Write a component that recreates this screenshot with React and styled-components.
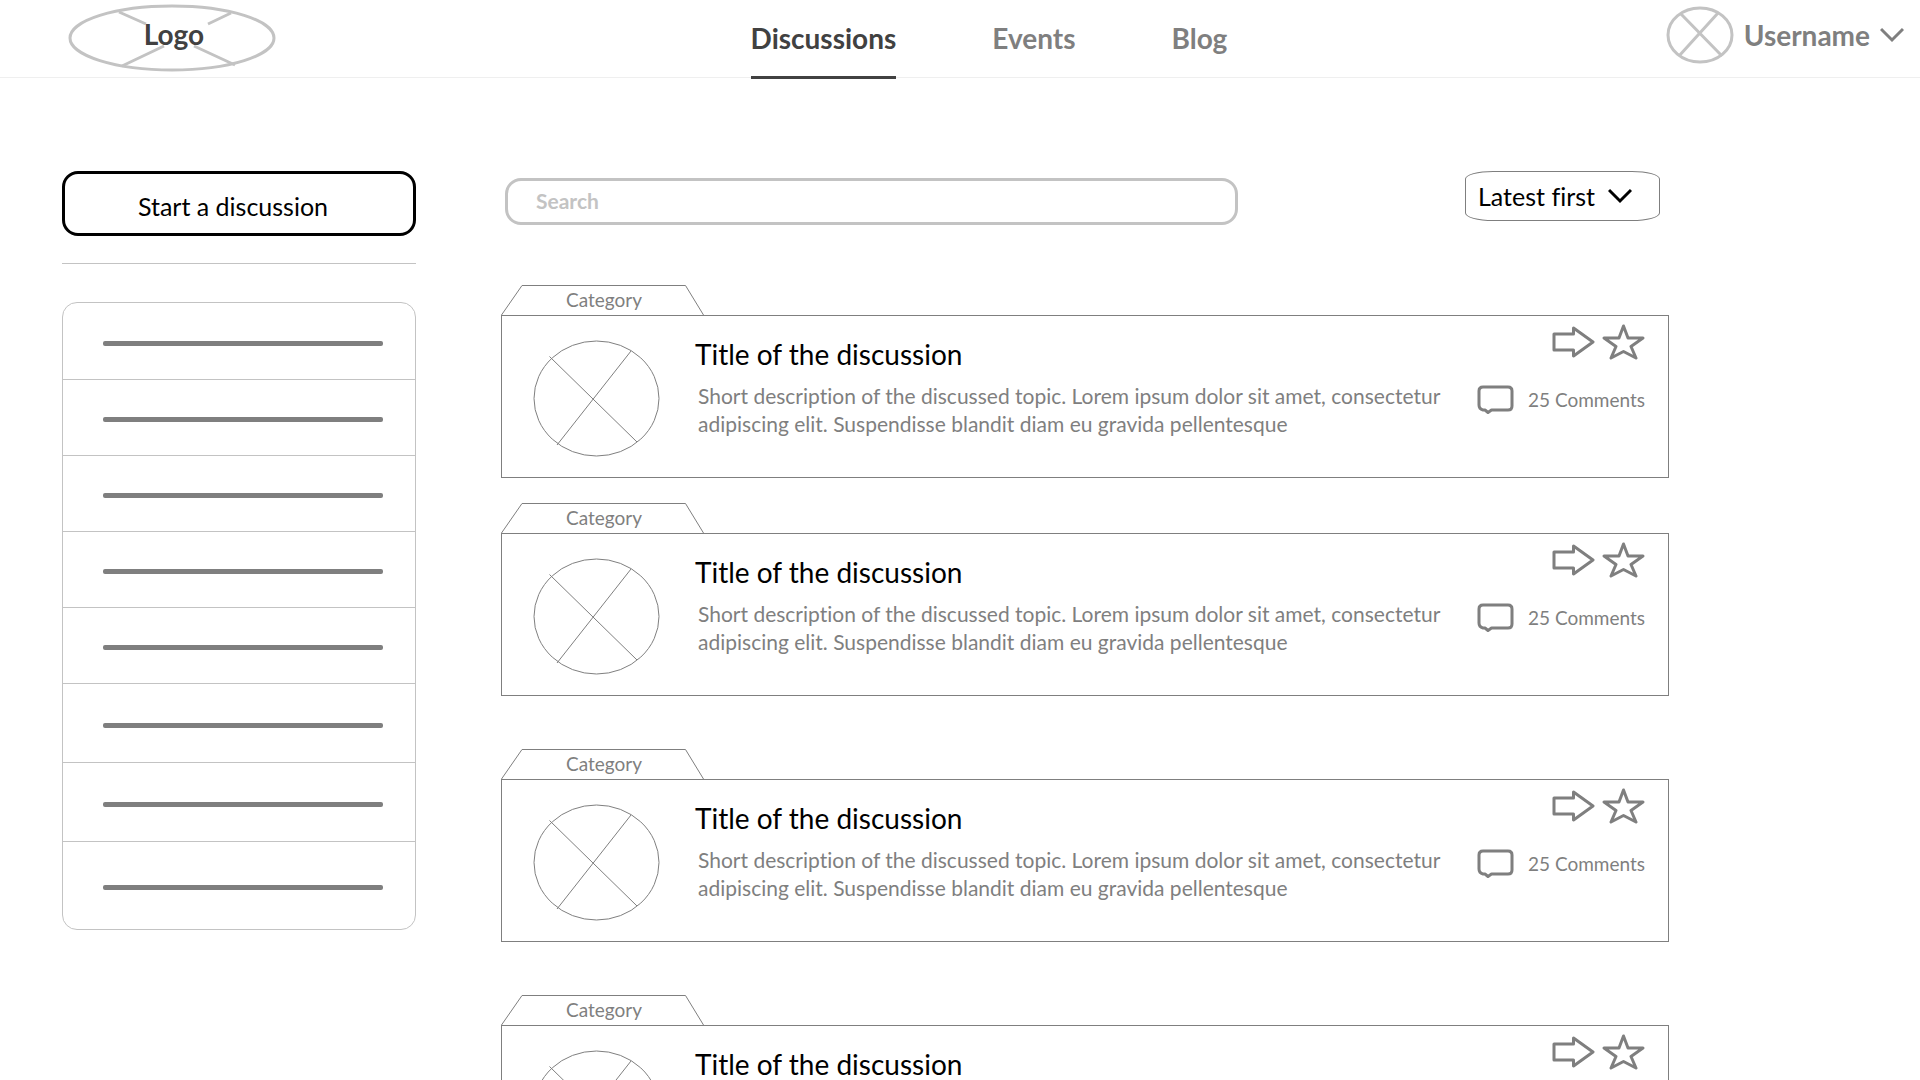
import React from "react";
import styled, { createGlobalStyle } from "styled-components";

const ink = "#414141";
const mid = "#7f7f7f";
const pale = "#c3c3c3";

const GlobalStyle = createGlobalStyle`
  *, *::before, *::after { box-sizing: border-box; }
  body {
    margin: 0;
    background: #fff;
    color: ${mid};
    font-family: Lato, "Open Sans", sans-serif;
    font-variant-ligatures: none;
  }
  button, input, select { font: inherit; color: inherit; font-variant-ligatures: none; }
  button { background: none; border: 0; padding: 0; cursor: pointer; }
  a { color: inherit; text-decoration: none; }
  svg { display: block; fill: none; flex: none; }
`;

const Header = styled.header`
  display: grid;
  grid-template-columns: 1fr auto 1fr;
  height: 78px;
  padding: 0 16px 0 68px;
  border-bottom: 1px solid #efefef;
`;

const Brand = styled.a`
  display: grid;
  align-items: center;
  justify-items: center;
  justify-self: start;
  height: 76px;
  color: ${ink};
  font-size: 28px;
  line-height: 28px;
  font-weight: 700;

  > * { grid-area: 1 / 1; }
  span { padding: 0 0 8px 4px; }
`;

const Nav = styled.nav`
  display: flex;
  gap: 96px;
  padding-left: 6px;
`;

const NavLink = styled.a`
  position: relative;
  display: flex;
  align-items: center;
  padding-bottom: 2px;
  color: ${(p) => (p.$active ? ink : mid)};
  font-size: 28px;
  line-height: 32px;
  font-weight: 700;

  &::after {
    content: "";
    display: ${(p) => (p.$active ? "block" : "none")};
    position: absolute;
    left: 0;
    right: 0;
    bottom: -2px;
    height: 3px;
    background: ${ink};
  }
`;

const Account = styled.button`
  display: flex;
  align-items: center;
  justify-self: end;
  gap: 10px;
  height: 70px;
  font-size: 28px;
  line-height: 32px;
  font-weight: 700;
`;

const Page = styled.div`
  display: grid;
  grid-template-columns: 354px minmax(0, 1168px);
  column-gap: 85px;
  padding: 93px 62px 40px;
`;

const Sidebar = styled.aside`
  display: flex;
  flex-direction: column;
`;

const StartButton = styled.button`
  height: 65px;
  padding: 4px 12px 0 0;
  border: 3px solid #000;
  border-radius: 16px;
  color: #000;
  font-size: 25px;
`;

const Rule = styled.hr`
  width: 100%;
  margin: 27px 0 38px;
  border: 0;
  border-top: 1px solid ${pale};
`;

const TopicList = styled.ul`
  margin: 0;
  padding: 0;
  list-style: none;
  border: 1px solid ${pale};
  border-radius: 15px;
`;

const Topic = styled.li`
  display: flex;
  align-items: center;
  height: 76px;
  padding: 4px 32px 0 40px;

  & + & { border-top: 1px solid ${pale}; }
  &:nth-child(n + 6) { height: 79px; }
  &:last-child { height: 88px; }
`;

const TopicBar = styled.span`
  flex: 1;
  height: 5px;
  border-radius: 2px;
  background: ${mid};
`;

const Toolbar = styled.div`
  display: flex;
  align-items: flex-start;
  justify-content: space-between;
  gap: 32px;
  padding: 0 9px 0 4px;
  margin-bottom: 60px;
`;

const SearchBox = styled.input`
  flex: 0 1 733px;
  min-width: 0;
  height: 47px;
  margin-top: 7px;
  padding: 0 28px 3px;
  border: 3px solid ${pale};
  border-radius: 16px;
  background: #fff;
  color: ${ink};
  font-size: 21px;
  font-weight: 700;

  &::placeholder { color: ${pale}; opacity: 1; }
`;

const SortBox = styled.div`
  display: grid;
  align-items: center;

  > * { grid-area: 1 / 1; }
  svg { justify-self: end; margin-right: 28px; pointer-events: none; }
`;

const SortSelect = styled.select`
  appearance: none;
  width: 195px;
  height: 50px;
  padding: 0 60px 0 12px;
  border: 1px solid ${mid};
  border-radius: 28px / 8px;
  background: #fff;
  color: #000;
  font-size: 25px;
`;

const Feed = styled.main`
  min-width: 0;
`;

const Post = styled.article`
  & + & { margin-top: 53px; }
  &:nth-of-type(2) { margin-top: 25px; }
`;

const Tab = styled.div`
  display: grid;
  align-items: center;
  justify-items: center;
  width: 203px;
  height: 30px;
  font-size: 19px;
  line-height: 28px;

  > * { grid-area: 1 / 1; }
  span { padding-left: 3px; }
`;

const Card = styled.div`
  display: flex;
  min-height: 163px;
  padding: 0 23px 0 31px;
  border: 1px solid ${mid};
`;

const Figure = styled.div`
  margin: 24px 35px 0 0;
`;

const Body = styled.div`
  flex: 1;
  min-width: 0;
  padding-top: 22px;
`;

const Title = styled.h2`
  margin: 0;
  color: #000;
  font-size: 28px;
  line-height: 32px;
  font-weight: 400;
`;

const Summary = styled.p`
  margin: 12px 0 0;
  padding-left: 3px;
  font-size: 21px;
  line-height: 28px;
`;

const Aside = styled.div`
  display: flex;
  flex-direction: column;
  align-items: flex-end;
  gap: 25px;
  padding-top: 8px;
`;

const Actions = styled.div`
  display: flex;
  align-items: center;
  gap: 7px;
`;

const Comments = styled.a`
  display: flex;
  align-items: center;
  gap: 14px;
  font-size: 19px;
  line-height: 28px;
  white-space: nowrap;
`;

const LogoMark = () => (
  <svg width="208" height="68" viewBox="0 0 208 68" stroke={pale} strokeWidth="3" aria-hidden="true">
    <ellipse cx="104" cy="34" rx="102" ry="32" />
    <path d="M51 8l27 12M163 9l-23 11M54 62l42 -20M126 42l41 19" />
  </svg>
);

const AccountMark = () => (
  <svg width="68" height="58" viewBox="0 0 68 58" stroke={pale} strokeWidth="3" aria-hidden="true">
    <ellipse cx="34" cy="29" rx="32" ry="27" />
    <path d="M15 8l41 42M52 7L13 50" />
  </svg>
);

const Chevron = ({ color }) => (
  <svg width="24" height="16" viewBox="0 0 24 16" stroke={color} strokeWidth="3" aria-hidden="true">
    <path d="M1 2l11 11L23 2" />
  </svg>
);

const AvatarMark = () => (
  <svg width="127" height="117" viewBox="0 0 127 117" stroke={mid} aria-hidden="true">
    <ellipse cx="63.5" cy="58.5" rx="62.5" ry="57.5" />
    <path d="M16.500 16.500L104 102M98 11L24 105" />
  </svg>
);

const TabShape = () => (
  <svg width="203" height="30" viewBox="0 0 203 30" stroke={mid} aria-hidden="true">
    <path d="M.5 30L21 .5H184.500L202.500 30" />
  </svg>
);

const ArrowIcon = () => (
  <svg width="43" height="34" viewBox="0 0 43 34" stroke={mid} strokeWidth="3" strokeLinejoin="round" aria-hidden="true">
    <path d="M2 9h19.500V3L41 17L21.500 31V25H2z" />
  </svg>
);

const StarIcon = () => (
  <svg width="43" height="36" viewBox="0 0 43 36" stroke={mid} strokeWidth="3" strokeLinejoin="round" aria-hidden="true">
    <path d="M21.500 2L26 14H41L29 22.500L34 34L21.500 27.500L9 34L14 22.500L2 14H17z" />
  </svg>
);

const CommentIcon = () => (
  <svg width="37" height="29" viewBox="0 0 37 29" stroke={mid} strokeWidth="3" strokeLinejoin="round" aria-hidden="true">
    <path d="M6 2H31Q35 2 35 6V21Q35 25 31 25H14.500L11 27.500L8 25H6Q2 24 2 20V6Q2 2 6 2z" />
  </svg>
);

const topics = [1, 2, 3, 4, 5, 6, 7, 8];

const posts = [1, 2, 3, 4].map((id) => ({
  id,
  category: "Category",
  title: "Title of the discussion",
  summary:
    "Short description of the discussed topic. Lorem ipsum dolor sit amet, consectetur adipiscing elit. Suspendisse blandit diam eu gravida pellentesque",
  comments: 25,
}));

const Discussion = ({ post }) => (
  <Post>
    <Tab>
      <TabShape />
      <span>{post.category}</span>
    </Tab>
    <Card>
      <Figure>
        <AvatarMark />
      </Figure>
      <Body>
        <Title>
          <a href="#discussion">{post.title}</a>
        </Title>
        <Summary>{post.summary}</Summary>
      </Body>
      <Aside>
        <Actions>
          <button type="button" aria-label="Share">
            <ArrowIcon />
          </button>
          <button type="button" aria-label="Favourite">
            <StarIcon />
          </button>
        </Actions>
        <Comments href="#comments">
          <CommentIcon />
          <span>{post.comments} Comments</span>
        </Comments>
      </Aside>
    </Card>
  </Post>
);

export default function App() {
  return (
    <>
      <GlobalStyle />
      <Header>
        <Brand href="#home">
          <LogoMark />
          <span>Logo</span>
        </Brand>
        <Nav>
          <NavLink href="#discussions" $active>
            Discussions
          </NavLink>
          <NavLink href="#events">Events</NavLink>
          <NavLink href="#blog">Blog</NavLink>
        </Nav>
        <Account type="button">
          <AccountMark />
          <span>Username</span>
          <Chevron color={mid} />
        </Account>
      </Header>
      <Page>
        <Sidebar>
          <StartButton type="button">Start a discussion</StartButton>
          <Rule />
          <TopicList>
            {topics.map((id) => (
              <Topic key={id}>
                <TopicBar />
              </Topic>
            ))}
          </TopicList>
        </Sidebar>
        <Feed>
          <Toolbar>
            <SearchBox type="search" placeholder="Search" aria-label="Search" />
            <SortBox>
              <SortSelect aria-label="Sort order" defaultValue="latest">
                <option value="latest">Latest first</option>
                <option value="oldest">Oldest first</option>
              </SortSelect>
              <Chevron color="#000" />
            </SortBox>
          </Toolbar>
          {posts.map((post) => (
            <Discussion key={post.id} post={post} />
          ))}
        </Feed>
      </Page>
    </>
  );
}
